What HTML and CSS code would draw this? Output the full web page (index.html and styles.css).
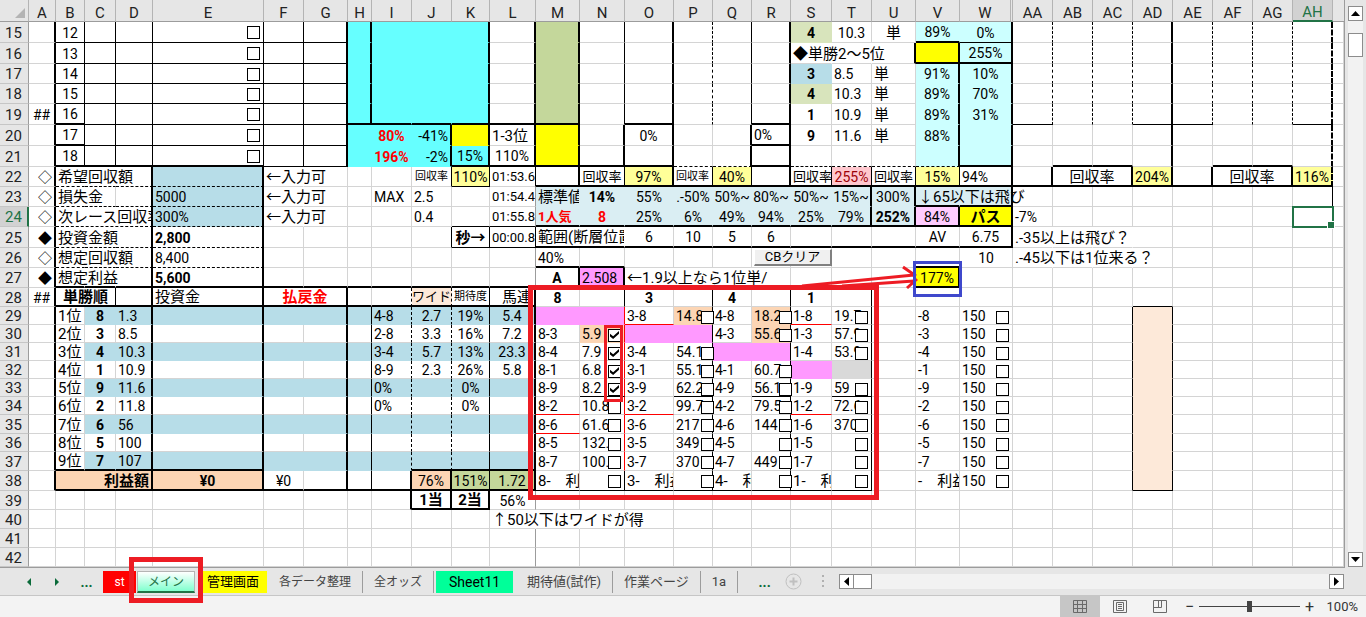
FILE: index.html
```html
<!DOCTYPE html>
<html lang="ja">
<head>
<meta charset="utf-8">
<title>メイン</title>
<link rel="stylesheet" href="styles.css">
</head>
<body>
<main class="workspace">
  <div class="sheet">
    <table class="grid" id="grid"></table>
    <svg class="marks" width="1000" height="520" fill="none" aria-hidden="true">
      <g stroke="#ed1c24">
        <rect x="530.500" y="287.500" width="346" height="210" stroke-width="5"/>
        <rect x="605.500" y="326.500" width="16" height="74" stroke-width="3"/>
        <path d="M802 286L914 275M842 286L914 281M903 267L916 276M907 288L917 279" stroke-width="3"/>
      </g>
      <rect x="914.500" y="262.500" width="46" height="33" stroke="#3f48cc" stroke-width="3"/>
    </svg>
  </div>
  <div class="vscroll">
    <button class="sb" aria-label="上へスクロール"><svg width="9" height="5"><path d="M4.500 0L9 5H0z"/></svg></button>
    <div class="vtrack"><div class="vthumb"></div></div>
    <button class="sb" aria-label="下へスクロール"><svg width="9" height="5"><path d="M0 0H9L4.500 5z"/></svg></button>
  </div>
</main>
<nav class="tabbar" aria-label="シート">
  <button class="nav" aria-label="前のシート"><svg width="4" height="8"><path d="M4 0V8L0 4z"/></svg></button>
  <button class="nav" aria-label="次のシート"><svg width="4" height="8"><path d="M0 0V8L4 4z"/></svg></button>
  <button class="more">...</button>
  <button class="tab red">st</button>
  <button class="tab current">メイン</button>
  <button class="tab yellow">管理画面</button>
  <button class="tab">各データ整理</button>
  <button class="tab">全オッズ</button>
  <button class="tab green">Sheet11</button>
  <button class="tab lg">期待値(試作)</button>
  <button class="tab lg">作業ページ</button>
  <button class="tab lg">1a</button>
  <button class="more after">...</button>
  <button class="add" aria-label="新しいシート"><svg width="17" height="17" fill="none" stroke="#c0c0c0"><circle cx="8.500" cy="8.500" r="7.500"/><path d="M8.500 4.500v8M4.500 8.500h8" stroke-width="2"/></svg></button>
  <svg class="grip" width="3" height="13" fill="#b0b0b0" aria-hidden="true"><path d="M0 0h2v2H0zM0 5h2v2H0zM0 10h2v2H0z"/></svg>
  <div class="hscroll">
    <button class="sb" aria-label="左へスクロール"><svg width="5" height="9"><path d="M5 0V9L0 4.500z"/></svg></button>
    <div class="hthumb"></div>
    <div class="htrack"></div>
    <button class="sb" aria-label="右へスクロール"><svg width="5" height="9"><path d="M0 0V9L5 4.500z"/></svg></button>
  </div>
</nav>
<footer class="status">
  <button class="view on" aria-label="標準"><svg width="14" height="14" fill="none" stroke="#6a6a6a"><path d="M.5.5h13v12H.5zM.5 4.500h13M.5 8.500h13M4.500.5v12M9.500.5v12"/></svg></button>
  <button class="view" aria-label="ページ レイアウト"><svg width="14" height="14" fill="none" stroke="#6a6a6a"><path d="M.5.5h13v12H.5zM3.500 2.500h7v8h-7zM5 4.500h4M5 6.500h4M5 8.500h4"/></svg></button>
  <button class="view" aria-label="改ページ プレビュー"><svg width="14" height="14" fill="none" stroke="#6a6a6a"><path d="M.5.5h13v12H.5zM.5 7.500h8V.5M5.500.5v7"/></svg></button>
  <button class="zoom" aria-label="縮小">−</button>
  <input class="slider" type="range" min="0" max="100" value="50" aria-label="ズーム">
  <button class="zoom" aria-label="拡大">+</button>
  <span class="percent">100%</span>
</footer>
<svg class="tabmark" width="74" height="46" fill="none" aria-hidden="true"><rect x="2.500" y="2.500" width="69" height="41" stroke="#ed1c24" stroke-width="5"/></svg>
<script src="sheet.js"></script>
</body>
</html>
```
FILE: styles.css
```css
* { box-sizing: border-box; }
body {
  margin: 0;
  min-height: 100vh;
  display: flex;
  flex-direction: column;
  position: relative;
  background: #f3f3f3;
  font-family: Roboto, "Noto Sans CJK JP", sans-serif;
  font-size: 14px;
  color: #000;
}
button { border: 0; padding: 0; background: none; font: inherit; color: inherit; white-space: nowrap; }

/* grid */
.workspace { display: flex; background: #e6e6e6; }
.sheet {
  flex: 1;
  min-width: 0;
  position: relative;
  overflow: hidden;
  border-right: 1px solid #9c9c9c;
  border-bottom: 1px solid #9c9c9c;
}
.grid { width: 100%; table-layout: fixed; border-collapse: separate; border-spacing: 0; background: #fff; }
.grid th, .grid td { padding: 1px 0 0; line-height: 16px; white-space: nowrap; }
.grid th { background: #e6e6e6; font-weight: 400; color: #222; }
.grid thead th {
  border-bottom: 1px solid #9c9c9c;
  border-right: 1px solid #b4b4b4;
  vertical-align: bottom;
  font-size: 15px;
}
.grid thead th.tail { border-right: 0; }
.grid thead th.gap { border-right: 3px double #b4b4b4; }
.grid tbody th {
  border-right: 1px solid #9c9c9c;
  border-bottom: 1px solid #c6c6c6;
  text-align: left;
  padding-left: 5px;
  font-size: 15px;
}
.grid thead th.sel { background: #d2d2d2; color: #217346; border-bottom: 2px solid #217346; }
.grid tbody th.sel { background: #d2d2d2; color: #217346; border-right: 2px solid #217346; }
.corner::after {
  content: "";
  display: block;
  width: 10px;
  height: 10px;
  margin: 0 3px 3px auto;
  background: #b4b4b4;
  clip-path: polygon(100% 0, 100% 100%, 0 100%);
}
.grid td {
  --line: #d4d4d4;
  border-right: 1px solid var(--line);
  border-bottom: 1px solid var(--line);
  overflow: hidden;
  padding-left: 2px;
}
.grid td.jp { font-size: 15px; }
.grid td.ov { overflow: visible; }
.grid td.c { text-align: center; padding-left: 0; }
.grid td.r { text-align: right; padding-right: 2px; }
.grid td.b { font-weight: 700; }
.grid td.s { font-size: 11px; }
.grid td.m { font-size: 13px; }
.grid td.redtext { color: #f00; }

.grid td.fz { border-right-color: #9c9c9c; }
.grid td.nr { border-right-color: transparent; }
.grid td.blue { background: #b7dde8; --line: #b7dde8; }
.grid td.cyan { background: #6ff; --line: #6ff; }
.grid td.lcyan { background: #cff; --line: #cff; }
.grid td.pale { background: #daeef3; --line: #daeef3; }
.grid td.yel { background: #ff0; --line: #ff0; }
.grid td.lyel { background: #ff9; --line: #ff9; }
.grid td.olive { background: #c4d79b; --line: #c4d79b; }
.grid td.lolive { background: #d8e4bc; --line: #d8e4bc; }
.grid td.rose { background: #ffc7ce; --line: #ffc7ce; color: #9c0006; }
.grid td.vio { background: #f9f; --line: #f9f; }
.grid td.pink { background: #fcf; --line: #fcf; }
.grid td.peach { background: #fcd5b4; --line: #fcd5b4; }
.grid td.lpeach { background: #fde9d9; --line: #fde9d9; }
.grid td.gray { background: #d9d9d9; --line: #d9d9d9; }

.grid td.r1 { border-right: 1px solid #000; }
.grid td.r2 { border-right: 2px solid #000; }
.grid td.rd { border-right: 1px dashed #000; }
.grid td.rr { border-right: 1px solid #f00; }
.grid td.rx { border-right: 2px dashed #000; }
.grid td.b1 { border-bottom: 1px solid #000; }
.grid td.b2 { border-bottom: 2px solid #000; }
.grid td.bd { border-bottom: 1px dashed #000; }
.grid td.br { border-bottom: 1px solid #f00; }

.grid td.has { position: relative; overflow: visible; }
.grid td.act { position: relative; z-index: 1; overflow: visible; outline: 2px solid #217346; outline-offset: -1px; }
.grid td.act::after {
  content: "";
  position: absolute;
  right: -3px;
  bottom: -3px;
  width: 6px;
  height: 6px;
  background: #217346;
  border: 1px solid #fff;
}
.tick {
  appearance: none;
  position: absolute;
  z-index: 1;
  top: 4px;
  right: 3px;
  width: 13px;
  height: 13px;
  margin: 0;
  border: 1px solid #000;
  background: #fff;
}
.tick.edge { right: -2px; }
.tick:checked::after {
  content: "";
  display: block;
  width: 9px;
  height: 8px;
  margin: 1px;
  background: #000;
  clip-path: polygon(0 35%, 35% 65%, 100% 0, 100% 35%, 35% 100%, 0 70%);
}
.clear {
  position: absolute;
  z-index: 1;
  top: 1px;
  left: 2px;
  width: 78px;
  height: 17px;
  background: #f0f0f0;
  border: 1px solid #fff;
  border-right: 2px solid #808080;
  border-bottom: 2px solid #808080;
  font-size: 13px;
  line-height: 14px;
}
.marks { position: absolute; left: 0; top: 0; z-index: 2; pointer-events: none; }

/* scroll bars */
.sb {
  width: 15px;
  height: 15px;
  flex: none;
  display: flex;
  align-items: center;
  justify-content: center;
  border: 1px solid #8c8c8c;
  background: #fff;
}
.vscroll { width: 21px; padding: 6px 3px 1px; display: flex; flex-direction: column; }
.vtrack { flex: 1; padding-top: 12px; background: #f2f2f2; }
.vthumb { height: 24px; border: 1px solid #8c8c8c; background: #fff; }
.hscroll { flex: 1; display: flex; margin: 0 22px 0 14px; }
.hthumb { width: 18px; height: 15px; border: 1px solid #8c8c8c; border-left: 0; background: #fff; }
.htrack { flex: 1; background: #f2f2f2; }

/* sheet tabs */
.tabbar {
  height: 28px;
  display: flex;
  align-items: center;
  background: #e6e6e6;
  border-bottom: 1px solid #c6c6c6;
  padding-left: 27px;
  color: #444;
}
.nav { width: 28px; height: 20px; display: flex; align-items: center; fill: #0b6b3a; }
.more { width: 19px; margin: 0 7px 0 -6px; color: #0b6b3a; font-weight: 700; line-height: 16px; }
.more.after { margin: 0 11px 0 17px; }
.add { width: 17px; height: 17px; }
.grip { margin-left: 20px; }
.tab {
  flex: none;
  height: 22px;
  padding: 0 11px;
  border-right: 1px solid #9c9c9c;
  font-size: 12px;
  line-height: 20px;
}
.tab.lg { font-size: 13px; }
.tab.red { background: #f00; color: #fff; width: 33px; border: 0; }
.tab.current {
  width: 58px;
  padding: 0;
  margin: 0 4px 0 1px;
  border: 1px solid #b4b4b4;
  border-bottom: 2px solid #217346;
  background: linear-gradient(#fff, #80ffce);
  color: #217346;
}
.tab.yellow { background: #ff0; color: #000; width: 69px; padding: 0; border-right-color: #e6e6e6; font-size: 13px; }
.tab.green { background: #0f9; color: #000; width: 80px; padding: 0; margin-left: 2px; border-right: 3px solid #e6e6e6; font-size: 14px; }
.tabmark { position: absolute; left: 129px; top: 557px; z-index: 3; pointer-events: none; }

/* status bar */
.status { height: 21px; display: flex; align-items: center; justify-content: flex-end; padding-right: 8px; color: #333; }
.view { width: 40px; height: 21px; display: flex; align-items: center; justify-content: center; }
.view.on { background: #c6c6c6; }
.zoom { width: 19px; font-size: 16px; line-height: 18px; }
.slider { appearance: none; width: 101px; height: 12px; margin: 0; background: linear-gradient(#444, #444) center / 100% 1px no-repeat; }
.slider::-webkit-slider-thumb { appearance: none; width: 5px; height: 11px; background: #444; }
.percent { width: 39px; text-align: right; font-size: 13px; }
```
FILE: sheet.js
```js
const columns = [
  ["A", 27], ["B", 29], ["C", 31], ["D", 37], ["E", 111], ["F", 40], ["G", 44], ["H", 24],
  ["I", 40], ["J", 40], ["K", 38], ["L", 46], ["M", 44], ["N", 45], ["O", 49], ["P", 39],
  ["Q", 39], ["R", 39], ["S", 41], ["T", 40], ["U", 44], ["V", 44], ["W", 53], ["AA", 40],
  ["AB", 40], ["AC", 40], ["AD", 40], ["AE", 40], ["AF", 40], ["AG", 40], ["AH", 40], ["", null]
];
const firstRow = 15;
const rowHeights = [21, 21, 20, 20, 21, 21, 21, 20, 20, 20, 21, 20, 20, 19, 18, 18, 18, 18,
  18, 18, 19, 18, 19, 20, 19, 19, 19, 19];
const names = columns.map(c => c[0]);
const cells = {};
const cell = id => cells[id] || (cells[id] = { text: "", cls: [], html: "" });

// put("A1", text, classes) fills one cell; format("A1:B2 C3", classes) styles ranges.
function put(id, text, cls) {
  const c = cell(id);
  c.text = text;
  if (cls) c.cls.push(...cls.split(" "));
}
function format(ranges, cls) {
  for (const range of ranges.split(" ")) {
    const [from, to = from] = range.split(":");
    const [, c1, r1] = from.match(/([A-Z]+)(\d+)/);
    const [, c2, r2] = to.match(/([A-Z]+)(\d+)/);
    for (let r = +r1; r <= +r2; r++)
      for (let i = names.indexOf(c1); i <= names.indexOf(c2); i++)
        cell(names[i] + r).cls.push(...cls.split(" "));
  }
}
function tick(id, edge, checked) {
  const c = cell(id);
  c.html = `<input type="checkbox" class="tick${edge ? " edge" : ""}" aria-label="${id}"${checked ? " checked" : ""}>`;
  c.cls.push("has");
}

// fills
format("H15:K19 H20:J21 K21", "cyan");
format("M15:M19 K38:L38", "olive");
format("K20 M20:M21 V16 W24 V27", "yel");
format("S15 S18", "lolive");
format("E22:E24 S17 C29:L29 C31:L31 C33:L33 C35:L35 C37:L37", "blue");
format("V15 V17:V21 W15:W21", "lcyan");
format("K22 O22 Q22 V22 AD22 AH22", "lyel");
format("M23:U24 V23:W23", "pale");
format("N27 M29:N29 O30:P30 Q31:R31 S32", "vio");
format("J28 AD29:AD38", "lpeach");
format("P29 R29:R30 N30 B38:E38 J38", "peach");
format("T22", "rose");
format("V24", "pink");
format("T32", "gray");

// borders
format("L22:L42", "fz");
format("A15:A38 G15:G21 H15:H19 K15:K21 J20:J21 L15:L21 M15:M21 O15:O22 N20:N21 Q20:Q21 R15:R22", "r2");
format("B15:F21 N15:N19 Q15:Q19", "r1");
format("B15:G18 C19:G20 F21:G21", "b1");
format("B19:B20 B21:E21 H19:M19 K21:O21 O19 R19:R21", "b2");
format("P15:P19 AA15:AC19 AE15:AG19", "rd");
format("P21:Q21 S21:V21", "bd");
format("U16 V16:V21 W15:W25 AD15:AD22 AA22 AC22 AE22 AG22 M22", "r2");
format("V15:V16 W16 W21 M22:AH22 AB21:AC21 AF21:AG21", "b2");
format("W15 AA19 AD19:AE19 AH19", "b1");
format("AH15:AH22", "rx");
format("AH23 J22:K22 N22 P22:Q22 S22:V22 J25:L25 L22", "r1");
format("K22 K24:L25", "b1");
format("B22:E26", "bd");
format("D22:D38 E22:E38 T23:U24 V24 G28:G38 L28:L38 M27:N27 U27 V27 I38:J38 I39:K39", "r2");
format("B27:L27 B28:L28 V23:W23 M24:W25 M26:N26 V26:V27 B37:E37 J37:L37 B38:L38 J39:K39", "b2");
format("B28:C28 H29:H38 K28:K38 N28 N38 P28:P38 R28:R38 T28:T38 AC29:AC38 AD29:AD38", "r1");
format("I28:I37 J28:J37", "rd");
format("N29:N37", "rr");
format("O29 S29 M34 O34 S34 M35", "br");
format("N33 P33 R33 T33 M38:T38 AD28 AD38", "b1");

// rows 15-21
for (let r = 15; r <= 21; r++) {
  put("B" + r, String(r - 3), "c");
  tick("E" + r);
}
[[15, "4", "10.3", "89%", "0%"], [17, "3", "8.5", "91%", "10%"], [18, "4", "10.3", "89%", "70%"],
 [19, "1", "10.9", "89%", "31%"], [20, "9", "11.6", "88%", ""]].forEach(([r, s, t, v, w]) => {
  put("S" + r, s, "c b");
  put("T" + r, t, r === 15 ? "c" : "");
  put("U" + r, "単", r === 15 ? "c" : "");
  put("V" + r, v, "c");
  put("W" + r, w, "c");
});
put("S16", "◆単勝2～5位", "ov nr");
format("T16", "nr");
put("W16", "255%", "c");
put("A19", "##", "c");
put("I20", "80%", "b redtext c"); put("J20", "-41%", "r");
put("I21", "196%", "b redtext c"); put("J21", "-2%", "r");
put("L20", "1-3位"); put("K21", "15%", "c"); put("L21", "110%", "c");
put("O20", "0%", "c"); put("R20", "0%");

// rows 22-28
["◇", "◇", "◇", "◆", "◇", "◆"].forEach((m, i) => put("A" + (22 + i), m, "r"));
["希望回収額", "損失金", "次レース回収率", "投資金額", "想定回収額", "想定利益"]
  .forEach((t, i) => put("B" + (22 + i), t, i === 2 ? "nr" : "ov nr"));
format("C22 C25:C27", "nr");
put("E23", "5000"); put("E24", "300%"); put("E25", "2,800", "b"); put("E26", "8,400"); put("E27", "5,600", "b");
for (const r of [22, 23, 24]) put("F" + r, "←入力可", "ov nr");
put("J22", "回収率", "s c"); put("K22", "110%", "c");
put("L22", "01:53.6"); put("L23", "01:54.4"); put("L24", "01:55.8"); put("L25", "00:00.8");
format("L22:L25", "m");
put("N22", "回収率", "m c"); put("O22", "97%", "c"); put("P22", "回収率", "s"); put("Q22", "40%", "c");
put("S22", "回収率", "m"); put("T22", "255%", "c"); put("U22", "回収率", "m c"); put("V22", "15%", "c"); put("W22", "94%");
put("AB22", "回収率", "c"); put("AD22", "204%", "c"); put("AF22", "回収率", "c"); put("AH22", "116%", "c");
put("I23", "MAX"); put("J23", "2.5"); put("J24", "0.4");
put("M23", "標準値"); put("N23", "14%", "b c");
["55%", ".-50%", "50%~", "80%~", "50%~", "15%~", "300%"].forEach((t, i) => put("OPQRSTU"[i] + 23, t, "c"));
put("V23", "↓65以下は飛び", "ov nr");
put("M24", "1人気", "b redtext m"); put("N24", "8", "b redtext c");
["25%", "6%", "49%", "94%", "25%", "79%"].forEach((t, i) => put("OPQRST"[i] + 24, t, "c"));
put("U24", "252%", "b c"); put("V24", "84%", "c"); put("W24", "パス", "b c"); put("AA24", "-7%");
put("K25", "秒→", "b c"); put("M25", "範囲(断層位置", "nr");
["6", "10", "5", "6"].forEach((t, i) => put("OPQR"[i] + 25, t, "c"));
put("V25", "AV", "c"); put("W25", "6.75", "c"); put("AA25", ".-35以上は飛び？", "ov nr");
put("M26", "40%"); put("W26", "10", "c"); put("AA26", ".-45以下は1位来る？", "ov nr");
format("AB25:AC26", "nr");
cell("R26").html = '<button class="clear">CBクリア</button>';
format("R26", "has");
put("M27", "A", "b c"); put("N27", "2.508"); put("O27", "←1.9以上なら1位単/", "ov nr"); format("P27:Q27", "nr");
put("V27", "177%", "c");
put("A28", "##", "c"); put("B28", "単勝順", "b c"); put("E28", "投資金"); put("F28", "払戻金", "b redtext c");
put("J28", "ワイド", "m c"); put("K28", "期待度", "s c"); put("L28", "馬連", "r");
put("M28", "8", "b c"); put("O28", "3", "b c"); put("Q28", "4", "b c"); put("S28", "1", "b c");
format("AH24", "act");

// ranking and pair odds, rows 29-37
const ranking = [
  ["8", "1.3", "4-8", "2.7", "19%", "5.4"], ["3", "8.5", "2-8", "3.3", "16%", "7.2"],
  ["4", "10.3", "3-4", "5.7", "13%", "23.3"], ["1", "10.9", "8-9", "2.3", "26%", "5.8"],
  ["9", "11.6", "0%", "", "0%", ""], ["2", "11.8", "0%", "", "0%", ""],
  ["6", "56", "", "", "", ""], ["5", "100", "", "", "", ""], ["7", "107", "", "", "", ""]
];
const pairs = [
  ["8", "M", "N", ["", "5.9", "7.9", "6.8", "8.2", "10.8", "61.6", "132.", "100."]],
  ["3", "O", "P", ["14.8", "", "54.1", "55.1", "62.2", "99.7", "217", "349", "370"]],
  ["4", "Q", "R", ["18.2", "55.6", "", "60.7", "56.1", "79.5", "144", "", "449"]],
  ["1", "S", "T", ["19.7", "57.9", "53.9", "", "59", "72.6", "370", "", ""]]
];
ranking.forEach(([horse, odds, pair, wide, hope, quin], i) => {
  const r = 29 + i;
  put("B" + r, (i + 1) + "位"); put("C" + r, horse, "b c"); put("D" + r, odds);
  put("I" + r, pair); put("J" + r, wide, "c"); put("K" + r, hope, "c"); put("L" + r, quin, "c");
  put("V" + r, "-" + horse); put("W" + r, "150"); tick("W" + r);
  for (const [lead, a, b, list] of pairs) {
    if (lead === horse) continue;
    put(a + r, lead + "-" + horse);
    put(b + r, list[i]);
    tick(b + r, b === "P" || b === "R", b === "N" && r < 34);
  }
});
put("B38", "利益額", "b r"); put("E38", "¥0", "b c"); put("F38", "¥0", "c");
put("J38", "76%", "c"); put("K38", "151%", "c"); put("L38", "1.72", "c");
for (const [lead, a, b] of pairs) {
  put(a + 38, lead + "-　利益");
  tick(b + 38, b === "P" || b === "R");
}
put("V38", "-　利益"); put("W38", "150"); tick("W38");
put("J39", "1当", "b c"); put("K39", "2当", "b c"); put("L39", "56%", "c");
put("L40", "↑50以下はワイドが得", "ov nr"); format("M40:N40", "nr");

const merged = { B24: 3, B28: 2, F28: 2, B38: 3, AB22: 2, AF22: 2, M25: 2 };
const mergedEnd = { B24: "r2", B28: "r1", F28: "r2", B38: "r2", AB22: "r2", AF22: "r2", M25: "" };

let html = '<colgroup><col style="width:29px">' +
  columns.map(([, w]) => w ? `<col style="width:${w}px">` : "<col>").join("") + "</colgroup>";
html += '<thead><tr style="height:22px"><th class="corner"></th>' +
  names.map(n => `<th class="${n === "AH" ? "sel" : n === "W" ? "gap" : n ? "" : "tail"}">${n}</th>`).join("") +
  "</tr></thead><tbody>";
rowHeights.forEach((h, i) => {
  const r = firstRow + i;
  html += `<tr style="height:${h}px"><th${r === 24 ? ' class="sel"' : ""}>${r}</th>`;
  for (let n = 0; n < names.length; n++) {
    const id = names[n] + r;
    const c = cells[id] || { text: "", cls: [], html: "" };
    const cls = [...c.cls];
    if (/[ぁ-ヿ一-鿿]/.test(c.text)) cls.push("jp");
    if (mergedEnd[id]) cls.push(mergedEnd[id]);
    const span = merged[id] || 1;
    html += `<td class="${cls.filter(Boolean).join(" ")}"${span > 1 ? ` colspan="${span}"` : ""}>${c.text}${c.html}</td>`;
    n += span - 1;
  }
  html += "</tr>";
});
document.getElementById("grid").innerHTML = html + "</tbody>";
```
